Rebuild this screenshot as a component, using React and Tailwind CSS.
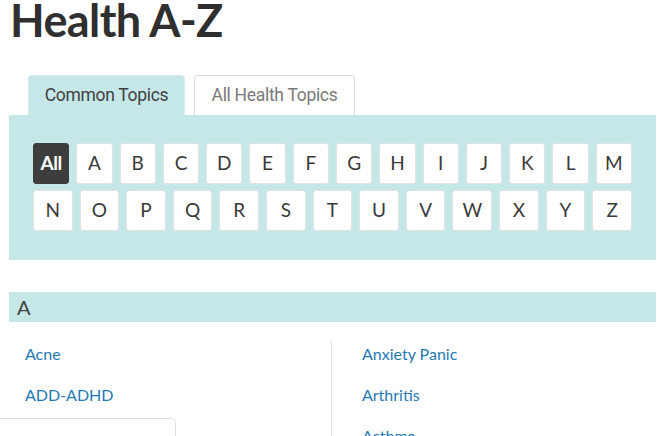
import React from "react";

const row1 = ["All", "A", "B", "C", "D", "E", "F", "G", "H", "I", "J", "K", "L", "M"];
const row2 = ["N", "O", "P", "Q", "R", "S", "T", "U", "V", "W", "X", "Y", "Z"];

function Letter({ l }) {
  const active = l === "All";
  return (
    <div
      className={
        "flex-1 h-[41px] flex items-center justify-center rounded-[3px] border text-[19px] " +
        (active
          ? "bg-[#3d3d3d] border-[#3d3d3d] text-white font-bold tracking-[-0.5px]"
          : "bg-white border-[#e3e3e3] text-[#3a3a3a]")
      }
    >
      {l}
    </div>
  );
}

export default function App() {
  return (
    <div
      className="relative w-[665px] h-[436px] overflow-hidden bg-white"
      style={{ fontFamily: "Lato, 'Noto Sans', sans-serif" }}
    >
      <h1 className="pl-[10px] h-[44px] text-[45px] leading-[44px] font-bold text-[#2f2f2f] tracking-[-0.6px] -mt-[2px]">
        Health A-Z
      </h1>

      <div className="flex gap-[9px] ml-[28px] mt-[33px]">
        <div
          className="w-[157px] h-[40px] flex items-center justify-center rounded-t-[4px] bg-[#c6e7e8] border border-b-0 border-[#d6ecec] text-[17.5px] text-[#3f3f3f] tracking-[-0.3px]"
          style={{ fontFamily: "Roboto, sans-serif" }}
        >
          Common Topics
        </div>
        <div
          className="w-[161px] h-[40px] flex items-center justify-center rounded-t-[4px] bg-white border border-b-0 border-[#dcdcdc] text-[17.5px] text-[#7a7a7a] tracking-[-0.3px]"
          style={{ fontFamily: "Roboto, sans-serif" }}
        >
          All Health Topics
        </div>
      </div>

      <div className="mx-[9px] bg-[#c6e7e8] pt-[28px] pb-[29px] px-[24px] flex flex-col gap-[6px]">
        <div className="flex gap-[7px]">
          {row1.map((l) => (
            <Letter key={l} l={l} />
          ))}
        </div>
        <div className="flex gap-[7px]">
          {row2.map((l) => (
            <Letter key={l} l={l} />
          ))}
        </div>
      </div>

      <div className="mx-[9px] mt-[32px] h-[30px] bg-[#c6e7e8] px-[8px] flex items-center text-[20px] text-[#404040]">
        A
      </div>

      <div className="flex mt-[19px] text-[16px] text-[#1f7ab5]">
        <div className="w-[331px] pl-[25px]">
          <div className="h-[41px] leading-[26px]">Acne</div>
          <div className="h-[41px] leading-[26px]">ADD-ADHD</div>
        </div>
        <div className="flex-1 border-l border-[#e0e0e0] pl-[30px] h-[120px]">
          <div className="h-[41px] leading-[26px]">Anxiety Panic</div>
          <div className="h-[41px] leading-[26px]">Arthritis</div>
          <div className="h-[41px] leading-[26px]">Asthma</div>
        </div>
      </div>

      <div className="absolute -left-px top-[418px] w-[177px] h-[30px] bg-white border border-[#dddddd] rounded-tr-[5px]"></div>
    </div>
  );
}
